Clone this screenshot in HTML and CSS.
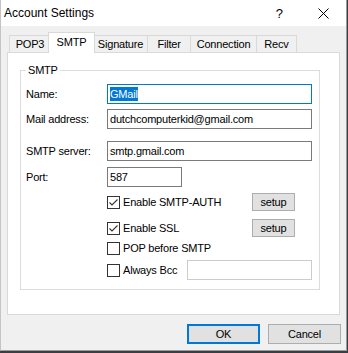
FILE: index.html
```html
<!DOCTYPE html>
<html lang="en">

<head>
    <meta charset="UTF-8">
    <meta name="viewport" content="width=device-width, initial-scale=1.0">
    <title>Account Settings</title>
    <link rel="stylesheet" href="styles.css">
</head>

<body>
    <div class="window">
        <div class="titlebar">
            <span class="title">Account Settings</span>
            <span class="help">?</span>
            <span class="close">
                <svg width="11" height="11" viewBox="0 0 11 11">
                    <path d="M0.5 0.5 L10.5 10.5 M10.5 0.5 L0.5 10.5" stroke="#000" stroke-width="1" fill="none" />
                </svg>
            </span>
        </div>

        <div class="tabs">
            <div class="tab tab-pop3">POP3</div>
            <div class="tab tab-smtp active">SMTP</div>
            <div class="tab tab-signature">Signature</div>
            <div class="tab tab-filter">Filter</div>
            <div class="tab tab-connection">Connection</div>
            <div class="tab tab-recv">Recv</div>
        </div>

        <div class="panel">
            <fieldset class="group">
                <legend>SMTP</legend>

                <div class="row row-name">
                    <label>Name:</label>
                    <div class="field focused"><span class="selected">GMail</span></div>
                </div>

                <div class="row row-mail">
                    <label>Mail address:</label>
                    <div class="field">dutchcomputerkid@gmail.com</div>
                </div>

                <div class="row row-server">
                    <label>SMTP server:</label>
                    <div class="field">smtp.gmail.com</div>
                </div>

                <div class="row row-port">
                    <label>Port:</label>
                    <div class="field port">587</div>
                </div>

                <div class="row row-check row-auth">
                    <div class="check wide checked">
                        <span class="box"><svg width="11" height="11" viewBox="0 0 11 11"><path d="M1.5 5.5 L4 8 L9.5 2.5" stroke="#333" stroke-width="1.1" fill="none" /></svg></span>
                        Enable SMTP-AUTH
                    </div>
                    <button class="setup">setup</button>
                </div>

                <div class="row row-check row-ssl">
                    <div class="check wide checked">
                        <span class="box"><svg width="11" height="11" viewBox="0 0 11 11"><path d="M1.5 5.5 L4 8 L9.5 2.5" stroke="#333" stroke-width="1.1" fill="none" /></svg></span>
                        Enable SSL
                    </div>
                    <button class="setup">setup</button>
                </div>

                <div class="row row-check row-pop">
                    <div class="check">
                        <span class="box"></span>
                        POP before SMTP
                    </div>
                </div>

                <div class="row row-check row-bcc">
                    <div class="check short">
                        <span class="box"></span>
                        Always Bcc
                    </div>
                    <div class="field bcc"></div>
                </div>
            </fieldset>
        </div>

        <div class="actions">
            <button class="btn default">OK</button>
            <button class="btn">Cancel</button>
        </div>
    </div>
</body>

</html>
```

FILE: styles.css
```css
* {
    box-sizing: border-box;
}

body {
    margin: 0;
    background-color: #3a3d42;
    font-family: 'Liberation Sans', Arial, sans-serif;
    font-size: 11px;
    letter-spacing: -0.2px;
    color: #000;
}

.window {
    width: 347px;
    height: 351px;
    background-color: #f0f0f0;
    border-left: 1px solid #c4c4c4;
    border-right: 1px solid #9c9c9c;
    border-bottom: 1px solid #9c9c9c;
    display: flex;
    flex-direction: column;
}

/* title bar */
.titlebar {
    height: 26px;
    background-color: #fff;
    display: flex;
    align-items: center;
    padding-left: 3px;
    font-size: 12px;
    letter-spacing: 0;
}

.title {
    flex: 1;
}

.help {
    margin-right: 35px;
    font-size: 13px;
}

.close {
    display: flex;
    margin-right: 17px;
}

/* tabs */
.tabs {
    height: 26px;
    display: flex;
    align-items: flex-end;
    padding-left: 8px;
}

.tab {
    height: 17px;
    line-height: 16px;
    text-align: center;
    background-color: #f0f0f0;
    border: 1px solid #d9d9d9;
    border-bottom: none;
    margin-right: -1px;
}

.tab.active {
    position: relative;
    z-index: 1;
    height: 21px;
    line-height: 18px;
    margin: 0 -2px -1px -2px;
    background-color: #fff;
}

.tab-pop3 { width: 42px; }
.tab-smtp { width: 47px; }
.tab-signature { width: 55px; }
.tab-filter { width: 44px; }
.tab-connection { width: 67px; }
.tab-recv { width: 41px; }

/* panel */
.panel {
    margin-left: 6px;
    width: 333px;
    height: 263px;
    background-color: #fff;
    border: 1px solid #d9d9d9;
    padding: 10px 0 0 12px;
}

.group {
    width: 299px;
    height: 227px;
    margin: 0;
    padding: 0 7px 0 5px;
    border: 1px solid #dcdcdc;
}

.group legend {
    padding: 0 2px;
    line-height: 14px;
    font-size: 11px;
}

.row {
    display: flex;
    align-items: center;
    height: 20px;
}

.row label {
    width: 81px;
}

.row-name { margin-top: 7px; }
.row-mail { margin-top: 5px; }
.row-server { margin-top: 12px; }
.row-port { margin-top: 6px; }
.row-auth { margin-top: 6px; height: 18px; }
.row-ssl { margin-top: 8px; height: 18px; }
.row-pop { margin-top: 2px; height: 18px; }
.row-bcc { margin-top: 3px; }

.row-check {
    padding-left: 81px;
}

.field {
    flex: 1;
    height: 20px;
    line-height: 18px;
    padding-left: 2px;
    border: 1px solid #7a7a7a;
    background-color: #fff;
    white-space: nowrap;
    overflow: hidden;
}

.field.focused {
    border-color: #0078d7;
}

.field .selected {
    background-color: #0078d7;
    color: #fff;
    padding: 1px 0;
}

.field.port {
    flex: none;
    width: 75px;
}

.field.bcc {
    flex: none;
    width: 125px;
    border-color: #cccccc;
}

/* checkboxes */
.check {
    display: flex;
    align-items: center;
}

.check.wide {
    width: 145px;
}

.check.short {
    width: 80px;
}

.box {
    width: 13px;
    height: 13px;
    margin-right: 3px;
    border: 1px solid #333;
    background-color: #fff;
    display: flex;
}

/* buttons */
button {
    font-family: inherit;
    font-size: 11px;
    letter-spacing: inherit;
    color: #000;
    background-color: #e1e1e1;
    border: 1px solid #adadad;
    padding: 0;
    margin: 0;
}

.setup {
    width: 43px;
    height: 18px;
}

.actions {
    display: flex;
    justify-content: flex-end;
    gap: 8px;
    margin-top: 9px;
    padding-right: 5px;
}

.btn {
    width: 73px;
    height: 20px;
}

.btn.default {
    border: 2px solid #0078d7;
}
```
